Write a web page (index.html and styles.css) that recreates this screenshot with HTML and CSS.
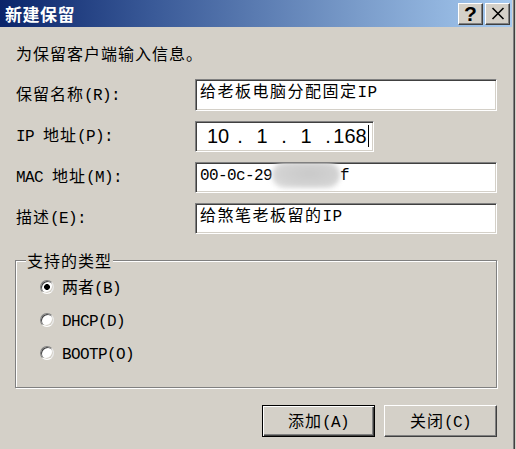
FILE: index.html
```html
<!DOCTYPE html>
<html lang="zh-CN">
<head>
<meta charset="utf-8">
<title>新建保留</title>
<link rel="stylesheet" href="styles.css">
</head>
<body>
<div class="window">
  <div class="titlebar">
    <span class="title">新建保留</span>
    <div class="tb-buttons">
      <div class="tb-btn help">?</div>
      <div class="tb-btn close">
        <svg width="14" height="13" viewBox="0 0 14 13"><path d="M1.5 1 L12.5 12 M12.5 1 L1.5 12" stroke="#000" stroke-width="1.6" fill="none"/></svg>
      </div>
    </div>
  </div>
  <div class="content">
    <p class="intro">为保留客户端输入信息。</p>
    <div class="form">
      <div class="lbl">保留名称<span class="en">(R):</span></div>
      <div class="field first">给老板电脑分配固定<span class="en">IP</span></div>

      <div class="lbl"><span class="en">IP </span>地址<span class="en">(P):</span></div>
      <div class="field ip">
        <span class="oct">10</span><span class="dot">.</span><span class="oct">1</span><span class="dot">.</span><span class="oct">1</span><span class="dot">.</span><span class="oct last">168<span class="caret"></span></span>
      </div>

      <div class="lbl"><span class="en">MAC </span>地址<span class="en">(M):</span></div>
      <div class="field mac"><span class="en">00-0c-29</span><span class="blur"></span><span class="en">f</span></div>

      <div class="lbl">描述<span class="en">(E):</span></div>
      <div class="field">给煞笔老板留的<span class="en">IP</span></div>
    </div>

    <fieldset class="group">
      <legend>支持的类型</legend>
      <div class="radio-row"><span class="radio checked"></span><span class="rlabel">两者<span class="en">(B)</span></span></div>
      <div class="radio-row"><span class="radio"></span><span class="rlabel"><span class="en">DHCP(D)</span></span></div>
      <div class="radio-row"><span class="radio"></span><span class="rlabel"><span class="en">BOOTP(O)</span></span></div>
    </fieldset>

    <div class="actions">
      <div class="btn default"><span>添加<span class="en">(A)</span></span></div>
      <div class="btn"><span>关闭<span class="en">(C)</span></span></div>
    </div>
  </div>
</div>
</body>
</html>
```

FILE: styles.css
```css
* {
  box-sizing: border-box;
  margin: 0;
  padding: 0;
}

html, body {
  width: 516px;
  height: 449px;
  overflow: hidden;
}

body {
  background: #d4d0c8;
  font-family: "Noto Sans CJK SC", sans-serif;
  font-size: 16px;
  color: #000;
}

.window {
  width: 515px;
  height: 449px;
  background: #d4d0c8;
  border-right: 1px solid #404040;
  box-shadow: inset -1px 0 0 #808080;
  padding-right: 2px;
  display: flex;
  flex-direction: column;
}

.titlebar {
  height: 27px;
  flex: none;
  display: flex;
  align-items: center;
  justify-content: space-between;
  padding: 0 2px 0 5px;
  background: linear-gradient(to right, #0a246a 0%, #3a5a98 30%, #7a9cca 70%, #a6caf0 100%);
}

.title {
  color: #fff;
  font-weight: 700;
  font-size: 17px;
  letter-spacing: 0.5px;
  line-height: 20px;
}

.tb-buttons {
  display: flex;
  gap: 2px;
}

.tb-btn {
  width: 25px;
  height: 22px;
  background: #d4d0c8;
  border: 1px solid;
  border-color: #fff #404040 #404040 #fff;
  box-shadow: inset -1px -1px 0 #808080;
  display: flex;
  align-items: center;
  justify-content: center;
}

.help {
  font-family: "Liberation Sans", sans-serif;
  font-weight: 700;
  font-size: 21px;
  line-height: 1;
  padding-bottom: 1px;
}

.content {
  padding: 16px 16px 0 16px;
}

.intro {
  line-height: 20px;
  letter-spacing: 1px;
}

.en {
  font-family: "Liberation Mono", monospace;
  font-size: 16px;
  letter-spacing: -0.6px;
}

.form {
  margin-top: 16px;
  display: grid;
  grid-template-columns: 179px 302px;
  grid-template-rows: 32px 31px 31px 31px;
  row-gap: 10px;
}

.lbl {
  align-self: center;
  letter-spacing: 1px;
  line-height: 20px;
  white-space: pre;
  margin-bottom: 2px;
}

.field {
  background: #fff;
  border: 1px solid;
  border-color: #808080 #fff #fff #808080;
  box-shadow: inset 1px 1px 0 #404040, inset -1px -1px 0 #d4d0c8;
  padding: 0 4px;
  line-height: 20px;
  letter-spacing: 1.5px;
  white-space: nowrap;
  overflow: hidden;
}

.field .en {
  letter-spacing: 0.4px;
}

.field.ip {
  width: 179px;
  display: flex;
  align-items: center;
  padding: 0 0 2px 3px;
  font-family: "Liberation Sans", sans-serif;
  font-size: 20px;
  letter-spacing: 0;
  line-height: 22px;
}

.oct {
  width: 38px;
  text-align: center;
}

.oct.last {
  display: flex;
  align-items: center;
  justify-content: center;
  padding-left: 2px;
}

.dot {
  width: 6px;
  text-align: center;
}

.caret {
  display: inline-block;
  width: 1px;
  height: 22px;
  background: #000;
  margin-left: 1px;
}

.field.mac .en {
  letter-spacing: -0.6px;
}

.blur {
  display: inline-block;
  vertical-align: top;
  width: 68px;
  height: 26px;
  margin-top: -1px;
  border-radius: 13px;
  background: radial-gradient(ellipse at 55% 45%, #c9c9c9 0%, #d2d2d2 55%, #e2e2e2 100%);
  filter: blur(2.5px);
}

.group {
  margin: 16px 0 0 -1px;
  width: 482px;
  min-width: 0;
  border: 1px solid #808080;
  box-shadow: inset 1px 1px 0 #fff, 1px 1px 0 #fff;
  padding: 7px 0 24px 10px;
}

.group legend {
  padding: 0 1px;
  background: #d4d0c8;
  letter-spacing: 1px;
  line-height: 20px;
}

.radio-row {
  display: flex;
  align-items: center;
  height: 20px;
  margin-left: 14px;
  gap: 8px;
}

.radio-row + .radio-row {
  margin-top: 13px;
}

.rlabel {
  letter-spacing: 0;
  line-height: 20px;
}

.radio {
  flex: none;
  width: 14px;
  height: 14px;
  border-radius: 50%;
  border: 1px solid;
  border-color: #808080 #e8e8e8 #ffffff #808080;
  box-shadow: inset 1px 1px 0 #404040, inset -1px -1px 0 #d4d0c8;
  background: #fff;
}

.radio.checked {
  background: radial-gradient(circle at 50% 50%, #000 0, #000 2.6px, #fff 3.2px);
}

.actions {
  margin-top: 17px;
  width: 481px;
  display: flex;
  justify-content: flex-end;
  gap: 9px;
}

.btn {
  width: 113px;
  height: 32px;
  display: flex;
  align-items: center;
  justify-content: center;
  border: 1px solid;
  border-color: #fff #404040 #404040 #fff;
  box-shadow: inset -1px -1px 0 #808080;
  letter-spacing: 1px;
  line-height: 20px;
}

.btn.default {
  border-color: #000;
  box-shadow: inset 1px 1px 0 #fff, inset -1px -1px 0 #404040, inset -2px -2px 0 #808080;
}
```
